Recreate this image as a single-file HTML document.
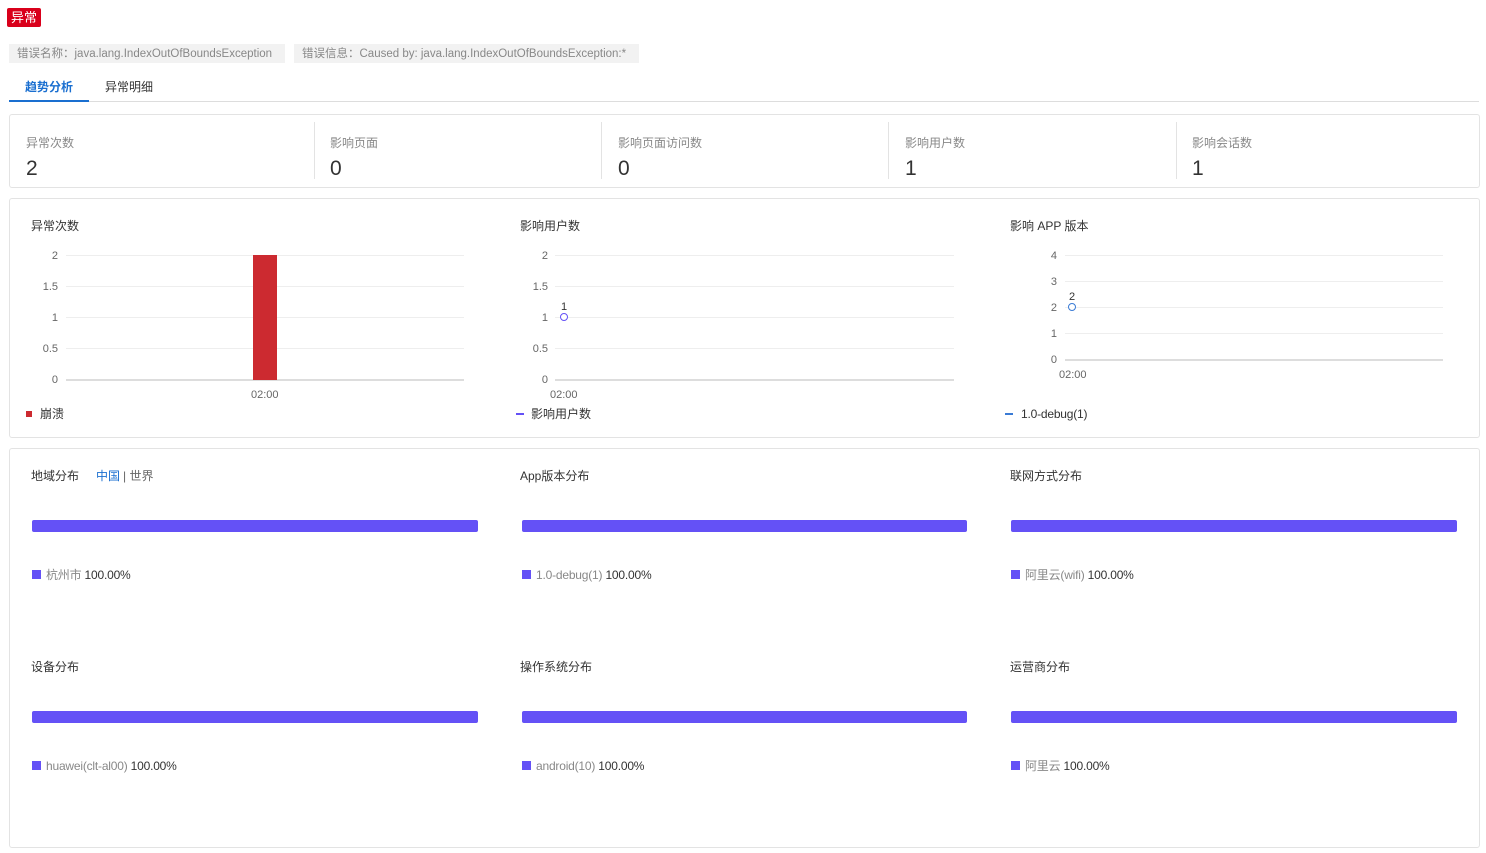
<!DOCTYPE html>
<html><head><meta charset="utf-8"><style>
*{margin:0;padding:0;box-sizing:border-box}
body{width:1486px;height:853px;background:#fff;font-family:"Liberation Sans","Noto Sans CJK SC",sans-serif;font-size:12px;color:#333;position:relative;overflow:hidden}
.a{position:absolute;white-space:nowrap;line-height:1}
.card{position:absolute;border:1px solid #e3e3e3;border-radius:3px}
.g{position:absolute;height:1px;background:#eee}
.ax{position:absolute;height:2px;background:#ddd}
.yl{position:absolute;width:20px;text-align:right;color:#666;font-size:11px;line-height:1}
.bar{position:absolute;height:12px;background:#6451f6;border-radius:2px}
.sq{position:absolute;width:9px;height:9px;background:#6451f6}
.gr{color:#888}
</style></head><body>
<div class="a" style="left:7px;top:8px;width:34px;height:19px;background:#d9001b;color:#fff;font-size:13px;line-height:19px;text-align:center;border-radius:2px">异常</div>
<div class="a" style="left:9px;top:44px;width:276px;height:19px;background:#f2f2f2;color:#888;font-size:11.5px;line-height:21px;padding-left:8px;overflow:hidden">错误名称：java.lang.IndexOutOfBoundsException</div>
<div class="a" style="left:294px;top:44px;width:345px;height:19px;background:#f2f2f2;color:#888;font-size:11.5px;line-height:21px;padding-left:8px;overflow:hidden">错误信息：Caused by: java.lang.IndexOutOfBoundsException:*</div>
<div class="a" style="left:25px;top:81px;color:#1a6fd0;font-weight:bold">趋势分析</div>
<div class="a" style="left:105px;top:81px;color:#333">异常明细</div>
<div style="position:absolute;left:9px;top:101px;width:1470px;height:1px;background:#ddd"></div>
<div style="position:absolute;left:9px;top:100px;width:80px;height:2px;background:#1a6fd0"></div>

<div class="card" style="left:9px;top:114px;width:1471px;height:74px"></div>
<div style="position:absolute;left:314px;top:122px;width:1px;height:57px;background:#e3e3e3"></div>
<div style="position:absolute;left:601px;top:122px;width:1px;height:57px;background:#e3e3e3"></div>
<div style="position:absolute;left:888px;top:122px;width:1px;height:57px;background:#e3e3e3"></div>
<div style="position:absolute;left:1176px;top:122px;width:1px;height:57px;background:#e3e3e3"></div>
<div class="a gr" style="left:26px;top:137px">异常次数</div><div class="a" style="left:26px;top:158px;font-size:21px">2</div>
<div class="a gr" style="left:330px;top:137px">影响页面</div><div class="a" style="left:330px;top:158px;font-size:21px">0</div>
<div class="a gr" style="left:618px;top:137px">影响页面访问数</div><div class="a" style="left:618px;top:158px;font-size:21px">0</div>
<div class="a gr" style="left:905px;top:137px">影响用户数</div><div class="a" style="left:905px;top:158px;font-size:21px">1</div>
<div class="a gr" style="left:1192px;top:137px">影响会话数</div><div class="a" style="left:1192px;top:158px;font-size:21px">1</div>

<div class="card" style="left:9px;top:198px;width:1471px;height:240px"></div>
<div class="a" style="left:31px;top:220px">异常次数</div>
<div class="g" style="left:66px;top:255px;width:398px"></div><div class="g" style="left:66px;top:286px;width:398px"></div><div class="g" style="left:66px;top:317px;width:398px"></div><div class="g" style="left:66px;top:348px;width:398px"></div><div class="ax" style="left:66px;top:379px;width:398px"></div>
<div class="yl" style="left:38px;top:251px">2</div><div class="yl" style="left:38px;top:282px">1.5</div><div class="yl" style="left:38px;top:313px">1</div><div class="yl" style="left:38px;top:344px">0.5</div><div class="yl" style="left:38px;top:375px">0</div>
<div style="position:absolute;left:253px;top:255px;width:24px;height:125px;background:#cc2a30"></div>
<div class="a" style="left:251px;top:390px;color:#666;font-size:11px">02:00</div>
<div style="position:absolute;left:26px;top:411px;width:6px;height:6px;background:#cc2a30"></div>
<div class="a" style="left:40px;top:408px">崩溃</div>
<div class="a" style="left:520px;top:220px">影响用户数</div>
<div class="g" style="left:555px;top:255px;width:399px"></div><div class="g" style="left:555px;top:286px;width:399px"></div><div class="g" style="left:555px;top:317px;width:399px"></div><div class="g" style="left:555px;top:348px;width:399px"></div><div class="ax" style="left:555px;top:379px;width:399px"></div>
<div class="yl" style="left:528px;top:251px">2</div><div class="yl" style="left:528px;top:282px">1.5</div><div class="yl" style="left:528px;top:313px">1</div><div class="yl" style="left:528px;top:344px">0.5</div><div class="yl" style="left:528px;top:375px">0</div>
<div style="position:absolute;left:560px;top:313px;width:8px;height:8px;border:1.5px solid #6451f6;border-radius:50%;background:#fff"></div>
<div class="a" style="left:561px;top:302px;font-size:11px">1</div>
<div class="a" style="left:550px;top:390px;color:#666;font-size:11px">02:00</div>
<div style="position:absolute;left:516px;top:413px;width:8px;height:2px;background:#6451f6"></div>
<div class="a" style="left:531px;top:408px">影响用户数</div>
<div class="a" style="left:1010px;top:220px">影响 APP 版本</div>
<div class="g" style="left:1065px;top:255px;width:378px"></div><div class="g" style="left:1065px;top:281px;width:378px"></div><div class="g" style="left:1065px;top:307px;width:378px"></div><div class="g" style="left:1065px;top:333px;width:378px"></div><div class="ax" style="left:1065px;top:359px;width:378px"></div>
<div class="yl" style="left:1037px;top:251px">4</div><div class="yl" style="left:1037px;top:277px">3</div><div class="yl" style="left:1037px;top:303px">2</div><div class="yl" style="left:1037px;top:329px">1</div><div class="yl" style="left:1037px;top:355px">0</div>
<div style="position:absolute;left:1068px;top:303px;width:8px;height:8px;border:1.5px solid #3a7bd5;border-radius:50%;background:#fff"></div>
<div class="a" style="left:1069px;top:292px;font-size:11px">2</div>
<div class="a" style="left:1059px;top:370px;color:#666;font-size:11px">02:00</div>
<div style="position:absolute;left:1005px;top:413px;width:8px;height:2px;background:#3a7bd5"></div>
<div class="a" style="left:1021px;top:408px;letter-spacing:-0.2px">1.0-debug(1)</div>

<div class="card" style="left:9px;top:448px;width:1471px;height:400px"></div>
<div class="a" style="left:31px;top:470px">地域分布</div>
<div class="a" style="left:96px;top:470px;color:#1a6fd0">中国</div><div class="a" style="left:123px;top:470px;color:#666">| 世界</div>
<div class="a" style="left:520px;top:470px">App版本分布</div>
<div class="a" style="left:1010px;top:470px">联网方式分布</div>
<div class="bar" style="left:32px;top:520px;width:446px"></div>
<div class="bar" style="left:522px;top:520px;width:445px"></div>
<div class="bar" style="left:1011px;top:520px;width:446px"></div>
<div class="sq" style="left:32px;top:570px"></div><div class="a" style="left:46px;top:569px;letter-spacing:-0.2px"><span class="gr">杭州市</span> 100.00%</div>
<div class="sq" style="left:522px;top:570px"></div><div class="a" style="left:536px;top:569px;letter-spacing:-0.2px"><span class="gr">1.0-debug(1)</span> 100.00%</div>
<div class="sq" style="left:1011px;top:570px"></div><div class="a" style="left:1025px;top:569px;letter-spacing:-0.2px"><span class="gr">阿里云(wifi)</span> 100.00%</div>

<div class="a" style="left:31px;top:661px">设备分布</div>
<div class="a" style="left:520px;top:661px">操作系统分布</div>
<div class="a" style="left:1010px;top:661px">运营商分布</div>
<div class="bar" style="left:32px;top:711px;width:446px"></div>
<div class="bar" style="left:522px;top:711px;width:445px"></div>
<div class="bar" style="left:1011px;top:711px;width:446px"></div>
<div class="sq" style="left:32px;top:761px"></div><div class="a" style="left:46px;top:760px;letter-spacing:-0.2px"><span class="gr">huawei(clt-al00)</span> 100.00%</div>
<div class="sq" style="left:522px;top:761px"></div><div class="a" style="left:536px;top:760px;letter-spacing:-0.2px"><span class="gr">android(10)</span> 100.00%</div>
<div class="sq" style="left:1011px;top:761px"></div><div class="a" style="left:1025px;top:760px;letter-spacing:-0.2px"><span class="gr">阿里云</span> 100.00%</div>
</body></html>
